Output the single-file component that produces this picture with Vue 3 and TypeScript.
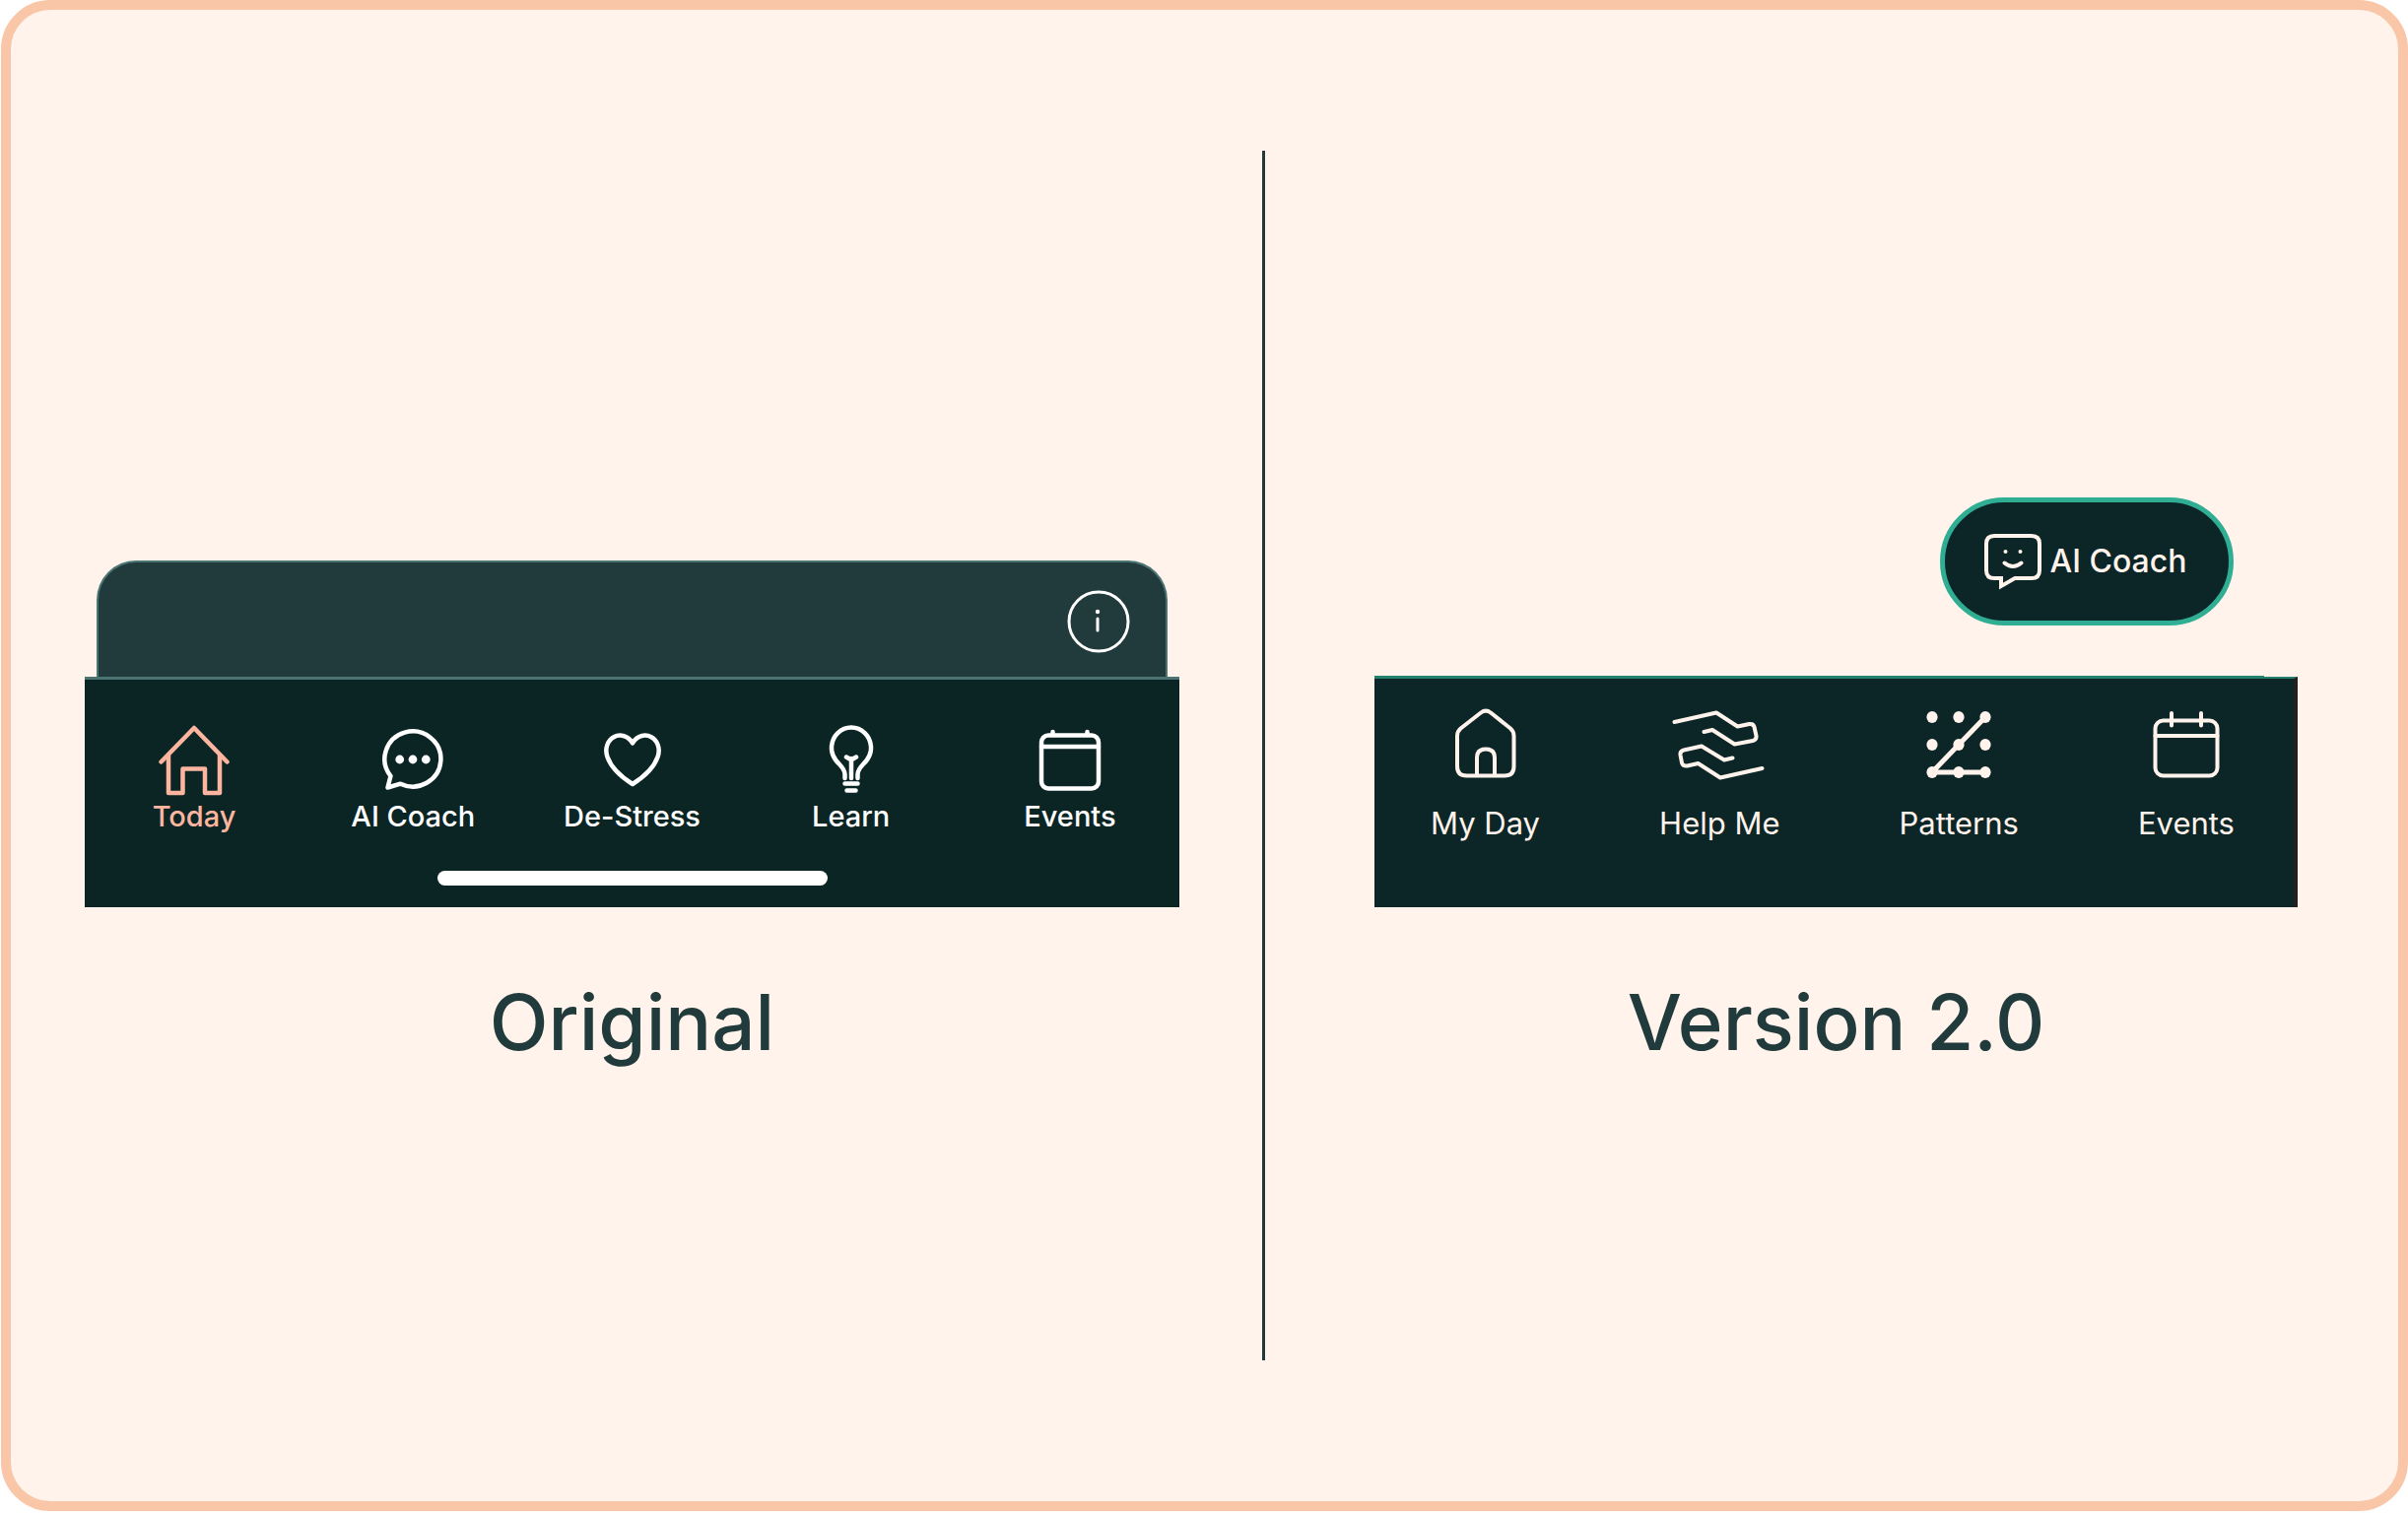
<script setup lang="ts">
type IconName = 'house' | 'chat' | 'heart' | 'bulb' | 'calendar'

interface Tab {
  label: string
  icon: IconName
  active?: boolean
}

const originalTabs: Tab[] = [
  { label: 'Today', icon: 'house', active: true },
  { label: 'AI Coach', icon: 'chat' },
  { label: 'De-Stress', icon: 'heart' },
  { label: 'Learn', icon: 'bulb' },
  { label: 'Events', icon: 'calendar' },
]

type NewIconName = 'home' | 'hands' | 'pattern' | 'calendar'

const newTabs: { label: string; icon: NewIconName }[] = [
  { label: 'My Day', icon: 'home' },
  { label: 'Help Me', icon: 'hands' },
  { label: 'Patterns', icon: 'pattern' },
  { label: 'Events', icon: 'calendar' },
]

const gridDots = [9, 36, 63]
const gridRows = [10, 38, 66]
</script>

<template>
  <main class="board">
    <section class="side side-original">
      <div class="sheet">
        <button class="info" type="button" aria-label="Information">
          <svg viewBox="0 0 64 64" aria-hidden="true">
            <circle cx="32" cy="32" r="30" fill="none" stroke="currentColor" stroke-width="3" />
            <circle cx="31" cy="22" r="2.2" fill="currentColor" />
            <path d="M31 29V41" stroke="currentColor" stroke-width="3" stroke-linecap="round" />
          </svg>
        </button>
      </div>
      <div class="bar bar-original">
        <nav class="tabs tabs-original" aria-label="Original navigation">
          <a
            v-for="tab in originalTabs"
            :key="tab.label"
            href="#"
            class="tab"
            :class="{ active: tab.active }"
          >
            <svg class="icon" viewBox="0 0 72 72" aria-hidden="true">
              <g v-if="tab.icon === 'house'">
                <path d="M2.500 37.500L36 3L69.500 37.500" />
                <path d="M10 31V69H24.500V44.500H47V69H62V31" />
              </g>
              <g v-else-if="tab.icon === 'chat'">
                <path d="M13.500 51.800A28.500 28 0 1 1 23.500 59.700L10.500 63.500Z" />
                <circle class="solid" cx="22.700" cy="35" r="4.400" />
                <circle class="solid" cx="36" cy="35" r="4.400" />
                <circle class="solid" cx="49.300" cy="35" r="4.400" />
              </g>
              <g v-else-if="tab.icon === 'heart'">
                <path d="M36 18.500C31 9.500 22 9.500 17 12.300C10.500 16 7.500 24 10.500 32.500C14.500 44 25 53 36 60C47 53 57.500 44 61.500 32.500C64.500 24 61.500 16 55 12.300C50 9.500 41 9.500 36 18.500Z" />
              </g>
              <g v-else-if="tab.icon === 'bulb'">
                <path d="M29.500 54V50C29.500 44 24.500 41 20.500 36A20 20.500 0 1 1 51.500 36C47.500 41 42.500 44 42.500 50V54M36 54V34M31 32.500L36 35.500L41 32.500" />
                <path d="M29.500 59.500H42.500M31.500 66.500H40.500" />
              </g>
              <g v-else>
                <rect x="7" y="10.500" width="58" height="54" rx="7" />
                <path d="M7 22H65M18.500 7V10M53.500 7V10" />
              </g>
            </svg>
            <span>{{ tab.label }}</span>
          </a>
        </nav>
        <div class="home-indicator"></div>
      </div>
      <h2 class="title">Original</h2>
    </section>

    <div class="divider" role="separator"></div>

    <section class="side side-new">
      <button class="coach" type="button">
        <svg class="coach-icon" viewBox="0 0 60 58" aria-hidden="true">
          <path d="M11 3H49Q57 3 57 11V38Q57 46 49 46H32L18 54V46H11Q3 46 3 38V11Q3 3 11 3Z" />
          <path d="M21.500 30.500Q30 37.500 38.500 30.500" />
          <circle class="solid" cx="22.500" cy="19" r="2" />
          <circle class="solid" cx="37.500" cy="19" r="2" />
        </svg>
        <span>AI Coach</span>
      </button>
      <div class="bar bar-new">
        <nav class="tabs tabs-new" aria-label="Version 2.0 navigation">
          <a v-for="tab in newTabs" :key="tab.label" href="#" class="tab">
            <svg v-if="tab.icon === 'hands'" class="icon hands" viewBox="0 0 96 76" aria-hidden="true">
              <path d="M2.500 15L45 5.500L66.500 19.500L78.500 17Q82.500 16.500 83.500 20L85.500 29Q86 33 82 34L63.500 37.500L41 23L32.500 25" />
              <path d="M91.500 62L49 71.500L26.500 57L15.500 59.500Q11 60 10 56.500L8.500 48.500Q8 44.500 12 43.500L30 39.500L53 53.500L61.500 51.500" />
            </svg>
            <svg v-else class="icon" viewBox="0 0 72 76" aria-hidden="true">
              <g v-if="tab.icon === 'home'">
                <path d="M31 5.500Q36 1.800 41 5.500L61 21.500Q64.500 24.500 64.500 29V60Q64.500 69.500 55 69.500H16.500Q7 69.500 7 60V29Q7 24.500 10.500 21.500Z" />
                <path d="M27 69V51Q27 42.500 36 42.500Q45 42.500 45 51V69" />
              </g>
              <g v-else-if="tab.icon === 'pattern'">
                <template v-for="y in gridRows" :key="y">
                  <ellipse v-for="x in gridDots" :key="x" class="solid" :cx="x" :cy="y" rx="5.600" ry="6" />
                </template>
                <path class="thick" d="M63 10L9 66H63" />
              </g>
              <g v-else>
                <rect x="4.500" y="13.500" width="63" height="56" rx="8" />
                <path d="M4.500 29H67.500M21 6V18.500M51 6V18.500" />
              </g>
            </svg>
            <span>{{ tab.label }}</span>
          </a>
        </nav>
      </div>
      <h2 class="title">Version 2.0</h2>
    </section>
  </main>
</template>

<style>
body {
  margin: 0;
  background: #ffffff;
}
</style>

<style scoped>
.board {
  box-sizing: border-box;
  display: grid;
  grid-template-columns: 1270fr 3px 1150fr;
  min-height: calc(100vh - 3px);
  margin: 0 0 3px 1px;
  padding: 143px 0;
  border: 10px solid #f9c6a8;
  border-radius: 50px;
  background: #fff3eb;
  font-family: Inter, "Liberation Sans", sans-serif;
}

.divider {
  background: #213b3c;
}

.side {
  display: flex;
  flex-direction: column;
  justify-content: flex-end;
  padding-bottom: 295px;
}

.side-original {
  padding-left: 75px;
  padding-right: 84px;
}

.side-new {
  padding-left: 111px;
  padding-right: 102px;
}

.sheet {
  box-sizing: border-box;
  display: flex;
  align-items: flex-start;
  justify-content: flex-end;
  height: 118px;
  margin: 0 12px;
  padding: 28px 36px 0;
  border: 2px solid #4b7473;
  border-bottom: 0;
  border-radius: 40px 40px 0 0;
  background: #213b3c;
}

.info {
  width: 64px;
  height: 64px;
  padding: 0;
  border: 0;
  background: none;
  color: #ffffff;
}

.info svg {
  display: block;
}

.bar {
  box-sizing: border-box;
  height: 234px;
}

.bar-original {
  border-top: 3px solid #4b7473;
  background: #0b2525;
}

.bar-new {
  position: relative;
  border-top: 2px solid #22806d;
  border-right: 4px solid #231f20;
  background: #0c2527;
}

/* The accent line is thicker up to the last stretch of the bar. */
.bar-new::before {
  content: "";
  position: absolute;
  top: -3px;
  right: 30px;
  left: 0;
  height: 2px;
  background: #22806d;
}

.tabs {
  display: flex;
}

.tab {
  display: flex;
  flex-direction: column;
  align-items: center;
  color: #ffffff;
  text-decoration: none;
}

.icon {
  fill: none;
  stroke: currentColor;
  stroke-width: 4;
  stroke-linecap: round;
  stroke-linejoin: round;
}

.solid {
  fill: currentColor;
  stroke: none;
}

.tabs-original {
  padding-top: 46px;
}

.tabs-original .tab {
  flex: 1 1 0;
  gap: 1px;
  font-size: 29px;
  font-weight: 500;
  line-height: 40px;
}

.tabs-original .tab.active {
  color: #fdb5a0;
}

.tabs-original .icon {
  width: 72px;
  height: 72px;
  stroke-width: 4.500;
}

.home-indicator {
  width: 396px;
  height: 15px;
  margin: 35px auto 0;
  border-radius: 8px;
  background: #ffffff;
}

.tabs-new {
  justify-content: space-between;
  padding: 29px 60px 0 57px;
}

.tabs-new .tab {
  gap: 20px;
  color: #fff3ec;
  font-size: 31px;
  line-height: 44px;
}

.tabs-new .icon {
  width: 72px;
  height: 76px;
}

.tabs-new .icon.hands {
  width: 96px;
}

.icon .thick {
  stroke-width: 5;
}

.coach {
  box-sizing: border-box;
  display: flex;
  align-items: center;
  justify-content: center;
  align-self: flex-end;
  gap: 8px;
  width: 298px;
  height: 130px;
  margin: 0 65px 52px 0;
  padding: 0 4px 0 0;
  border: 5px solid #2fae94;
  border-radius: 65px;
  background: #0c2527;
  color: #fff3ec;
  font-family: inherit;
  font-size: 32px;
  font-weight: 500;
  line-height: 44px;
}

.coach-icon {
  width: 60px;
  height: 58px;
  fill: none;
  stroke: currentColor;
  stroke-width: 4;
  stroke-linecap: round;
  stroke-linejoin: miter;
}

.title {
  margin: 69px 0 0;
  color: #213b3c;
  font-size: 78px;
  font-weight: 500;
  line-height: 96px;
  text-align: center;
}
</style>
